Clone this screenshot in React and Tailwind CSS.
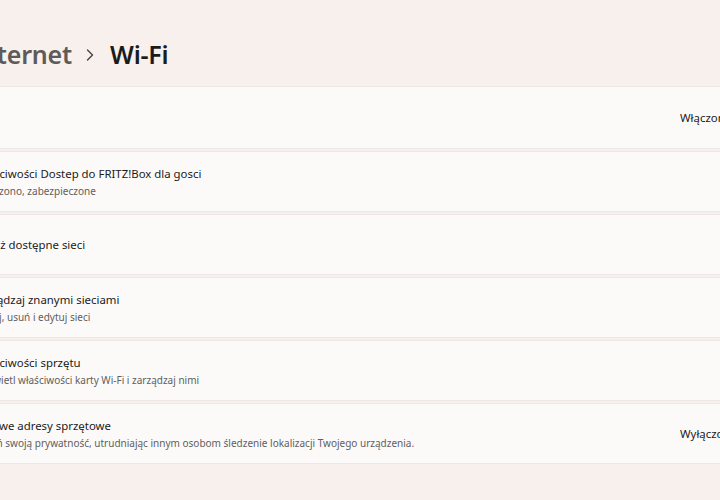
import React from 'react';
import { Wifi, ChevronRight, List, Settings2, Network, Shuffle } from 'lucide-react';

const rows = [
    { icon: Wifi, title: 'Wi-Fi', value: 'Włączone', toggle: true, on: true, tall: true },
    { icon: Wifi, title: 'Właściwości Dostep do FRITZ!Box dla gosci', sub: 'Połączono, zabezpieczone', chevron: true },
    { icon: List, title: 'Pokaż dostępne sieci', chevron: true },
    { icon: Network, title: 'Zarządzaj znanymi sieciami', sub: 'Dodaj, usuń i edytuj sieci', chevron: true },
    { icon: Settings2, title: 'Właściwości sprzętu', sub: 'Wyświetl właściwości karty Wi-Fi i zarządzaj nimi', chevron: true },
    { icon: Shuffle, title: 'Losowe adresy sprzętowe', sub: 'Chroń swoją prywatność, utrudniając innym osobom śledzenie lokalizacji Twojego urządzenia.', value: 'Wyłączone', toggle: true, on: false },
];

const Toggle = ({ on }) => (
    <div className={on
        ? 'w-[40px] h-[20px] rounded-full bg-[#b3541e] flex items-center justify-end px-[4px]'
        : 'w-[40px] h-[20px] rounded-full border border-[#8a8684] flex items-center px-[3px]'}>
        <div className={on ? 'w-[12px] h-[12px] rounded-full bg-white' : 'w-[12px] h-[12px] rounded-full bg-[#5c5957]'}></div>
    </div>
);

const SettingRow = ({ row }) => {
    const Icon = row.icon;
    return (
        <div className={(row.tall ? 'h-[63px] ' : 'h-[61px] ') + 'flex items-center border border-[#ece7e4] bg-[#fcfaf9] rounded-[4px] pl-[18px] pr-[20px]'}>
            <Icon className="w-[18px] h-[18px] text-[#222] shrink-0" strokeWidth={1.5} />
            <div className="ml-[16px] flex-1 min-w-0">
                <div className="text-[11.4px] leading-[17px] text-[#1b1b1b]">{row.title}</div>
                {row.sub && <div className="text-[10px] leading-[14px] mt-[2px] text-[#615e5d]">{row.sub}</div>}
            </div>
            {row.toggle ? (
                <div className="w-[100px] flex items-center">
                    <span className="text-[11.4px] text-[#1b1b1b] mr-[14px]">{row.value}</span>
                    <Toggle on={row.on} />
                </div>
            ) : (
                <div className="w-[100px] flex justify-end">
                    <ChevronRight className="w-[14px] h-[14px] text-[#333]" strokeWidth={1.5} />
                </div>
            )}
        </div>
    );
};

const App = () => {
    return (
        <div className="w-[720px] h-[500px] overflow-hidden bg-[#f7f0ec]" style={{ fontFamily: '"Noto Sans", "Open Sans", sans-serif' }}>
            <div className="ml-[-79px] w-[880px]">
                {/* Breadcrumb header */}
                <div className="h-[86px] flex items-center pt-[24px]">
                    <div className="ml-[-121px] w-[272px] flex justify-end">
                        <span className="text-[25px] font-semibold text-[#5d5a59] whitespace-nowrap tracking-[-0.2px]">Sieć i Internet</span>
                    </div>
                    <ChevronRight className="w-[20px] h-[20px] ml-[8px] mr-[10px] text-[#444]" strokeWidth={1.6} />
                    <span className="text-[25px] font-semibold text-[#1b1b1b] tracking-[-0.2px]">Wi-Fi</span>
                </div>

                {/* Settings list */}
                <div className="flex flex-col gap-[2px]">
                    {rows.map((row, i) => (
                        <SettingRow key={i} row={row} />
                    ))}
                </div>
            </div>
        </div>
    );
};

export default App;
